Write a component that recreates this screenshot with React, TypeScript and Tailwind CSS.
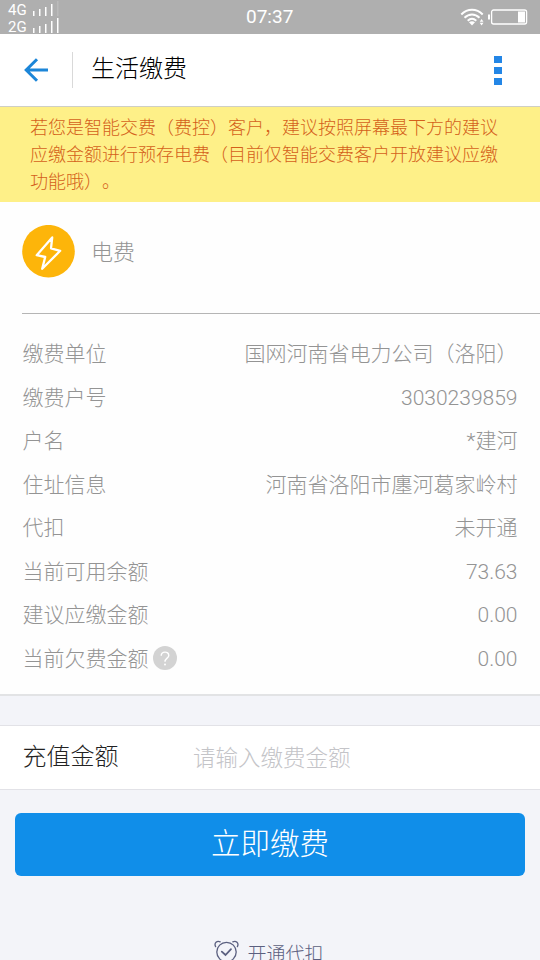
type Detail = {
  label: string
  value: string
  help?: boolean
}

const NOTICE = [
  '若您是智能交费（费控）客户，建议按照屏幕最下方的建议',
  '应缴金额进行预存电费（目前仅智能交费客户开放建议应缴',
  '功能哦）。',
]

const DETAILS: Detail[] = [
  { label: '缴费单位', value: '国网河南省电力公司（洛阳）' },
  { label: '缴费户号', value: '3030239859' },
  { label: '户名', value: '*建河' },
  { label: '住址信息', value: '河南省洛阳市廛河葛家岭村' },
  { label: '代扣', value: '未开通' },
  { label: '当前可用余额', value: '73.63' },
  { label: '建议应缴金额', value: '0.00' },
  { label: '当前欠费金额', value: '0.00', help: true },
]

export default function App() {
  return (
    <div className="flex h-[960px] w-[540px] flex-col overflow-hidden bg-[#f3f4f9] font-['Roboto','Noto_Sans_CJK_SC',sans-serif] font-light [text-spacing-trim:space-all]">
      <StatusBar />
      <Header />
      <div className="h-[95px] shrink-0 bg-[#fef088] pt-[7px] pl-[30px] text-[18px] leading-[27px] text-[#d4601a]">
        {NOTICE.map((line) => (
          <p key={line} className="whitespace-nowrap">{line}</p>
        ))}
      </div>

      <section className="h-[494px] shrink-0 border-b-2 border-[#e2e3e5] bg-[#fefefe]">
        <div className="ml-[22px] flex h-[112px] items-start border-b border-[#b5b5b5] pt-[23px]">
          <BoltIcon className="h-[53px] w-[53px]" />
          <span className="ml-[16px] pt-[12px] text-[22px] leading-[32px] text-[#949494]">电费</span>
        </div>
        <dl className="pt-[19px] pr-[22.5px] pl-[22.5px] text-[21px] text-[#949494]">
          {DETAILS.map((d) => (
            <div key={d.label} className="flex h-[43.5px] items-center justify-between leading-[43px] whitespace-nowrap">
              <dt className="flex items-center">
                {d.label}
                {d.help && <HelpIcon className="mb-[2px] ml-[4px] h-6 w-6" />}
              </dt>
              <dd>{d.value}</dd>
            </div>
          ))}
        </dl>
      </section>

      <label className="mt-[29px] flex h-[65px] shrink-0 items-center border-y border-[#e2e2e7] bg-white pl-[22.5px]">
        <span className="w-[170.5px] pb-[2px] text-[24px] leading-[36px] text-[#222]">充值金额</span>
        <input
          className="w-[300px] pt-[1px] text-[22.5px] leading-[36px] outline-none placeholder:text-[#c4c4c8]"
          placeholder="请输入缴费金额"
        />
      </label>

      <button className="mx-[15px] mt-[23px] h-[63px] shrink-0 rounded-[6px] bg-[#108ee9] text-[29.5px] leading-[61px] text-white">
        立即缴费
      </button>

      <div className="mt-[63px] flex shrink-0 items-start justify-center pr-[2px] text-[#5b6080]">
        <AlarmIcon className="mt-[1px] h-[26px] w-[26px]" />
        <span className="ml-[7px] pt-[2px] text-[19px] leading-[28px]">开通代扣</span>
      </div>
    </div>
  )
}

function StatusBar() {
  return (
    <div className="flex h-[34px] shrink-0 items-center bg-[#afafaf] pr-[12px] pl-[8px] font-normal text-white">
      <div className="w-[238px] text-[15px] leading-[17px]">
        <div className="flex h-[17px] items-start gap-[5px]">
          <span className="w-[20px] pt-[2px]">4G</span>
          <SignalIcon className="h-[16px] w-[28px]" level={4} />
        </div>
        <div className="flex h-[17px] items-start gap-[5px]">
          <span className="w-[20px] pt-[2px]">2G</span>
          <SignalIcon className="h-[16px] w-[28px]" level={5} />
        </div>
      </div>
      <span className="text-[19px]">07:37</span>
      <div className="ml-auto flex w-[68px] items-center">
        <WifiIcon className="h-[18px] w-[25px]" />
        <BatteryIcon className="ml-[3px] h-[16px] w-[40px]" />
      </div>
    </div>
  )
}

function Header() {
  return (
    <header className="flex h-[73px] shrink-0 items-center border-b border-[#cfcfc4] bg-white pl-[24px]">
      <svg className="h-[24px] w-[25px]" viewBox="0 0 25 24" fill="none" stroke="#1c86d8" strokeWidth="3">
        <path d="M24 12H2M13 1.2L2.2 12L13 22.8" />
      </svg>
      <div className="ml-[23px] h-[36px] w-px bg-[#d9d9d9]" />
      <h1 className="ml-[18px] pb-[3px] text-[24px] leading-[36px] text-black">生活缴费</h1>
      <div className="mr-[38px] ml-auto flex flex-col gap-[4px]">
        <i className="h-[7px] w-[8px] bg-[#2386e6]" />
        <i className="h-[7px] w-[8px] bg-[#2386e6]" />
        <i className="h-[7px] w-[8px] bg-[#2386e6]" />
      </div>
    </header>
  )
}

function SignalIcon({ className, level }: { className?: string; level: number }) {
  return (
    <svg className={className} viewBox="0 0 28 16" fill="currentColor">
      {[5, 7, 9, 12, 15].map((h, i) => (
        <rect key={h} x={i * 6} y={16 - h} width="1.5" height={h} opacity={i < level ? 1 : 0.15} />
      ))}
    </svg>
  )
}

function WifiIcon({ className }: { className?: string }) {
  return (
    <svg className={className} viewBox="0 0 25 18" fill="none" stroke="currentColor" strokeWidth="2">
      <path d="M1.3 6.5C7.5 0.3 16.5 0.3 22.7 6.5" />
      <path d="M4.5 9.7C9 5.4 15 5.4 19.5 9.7" />
      <path d="M7.7 12.7C10.3 10.4 13.7 10.4 16.3 12.7" />
      <path d="M9 14.2Q12 12.2 15 14.2L12 17.5Z" fill="currentColor" stroke="none" />
      <path d="M19.7 13.7L21.6 11L23.5 13.7ZM19.7 14.8L21.6 17.5L23.5 14.8Z" fill="currentColor" stroke="none" />
    </svg>
  )
}

function BatteryIcon({ className }: { className?: string }) {
  return (
    <svg className={className} viewBox="0 0 40 16" fill="none" stroke="currentColor">
      <path d="M1 5.5V10.5" strokeWidth="2" />
      <rect x="3.6" y="1" width="35" height="14" rx="2" strokeWidth="1.3" />
      <rect x="30" y="2.5" width="7" height="11" fill="currentColor" stroke="none" />
    </svg>
  )
}

function BoltIcon({ className }: { className?: string }) {
  return (
    <svg className={className} viewBox="0 0 53 53" fill="none">
      <circle cx="26.5" cy="26.2" r="26.3" fill="#fdb50a" />
      <path
        d="M30.2 12.5L14.7 30.2L23.2 32L20.2 43.8L38.2 25.8L29 23.3Z"
        stroke="#fff"
        strokeWidth="2.3"
        strokeLinejoin="round"
      />
    </svg>
  )
}

function HelpIcon({ className }: { className?: string }) {
  return (
    <svg className={className} viewBox="0 0 24 24" fill="none">
      <circle cx="12" cy="12" r="12" fill="#d3d3d3" />
      <path d="M8.2 9.8C8.2 4.9 15.8 4.9 15.8 9.5C15.8 12.2 12 12.2 12 15.8" stroke="#fff" strokeWidth="1.4" />
      <circle cx="12" cy="18.6" r="1" fill="#fff" />
    </svg>
  )
}

function AlarmIcon({ className }: { className?: string }) {
  return (
    <svg className={className} viewBox="0 0 26 26" fill="none" stroke="currentColor" strokeWidth="1.3" strokeLinecap="round">
      <circle cx="12.5" cy="12" r="9.7" />
      <path d="M1.6 6.6C-0.2 3 3 0.3 6.2 1.8M23.4 6.6C25.2 3 22 0.3 18.8 1.8" />
      <path d="M7.8 11.6L11.5 15L17 9.2" strokeWidth="1.8" />
    </svg>
  )
}
